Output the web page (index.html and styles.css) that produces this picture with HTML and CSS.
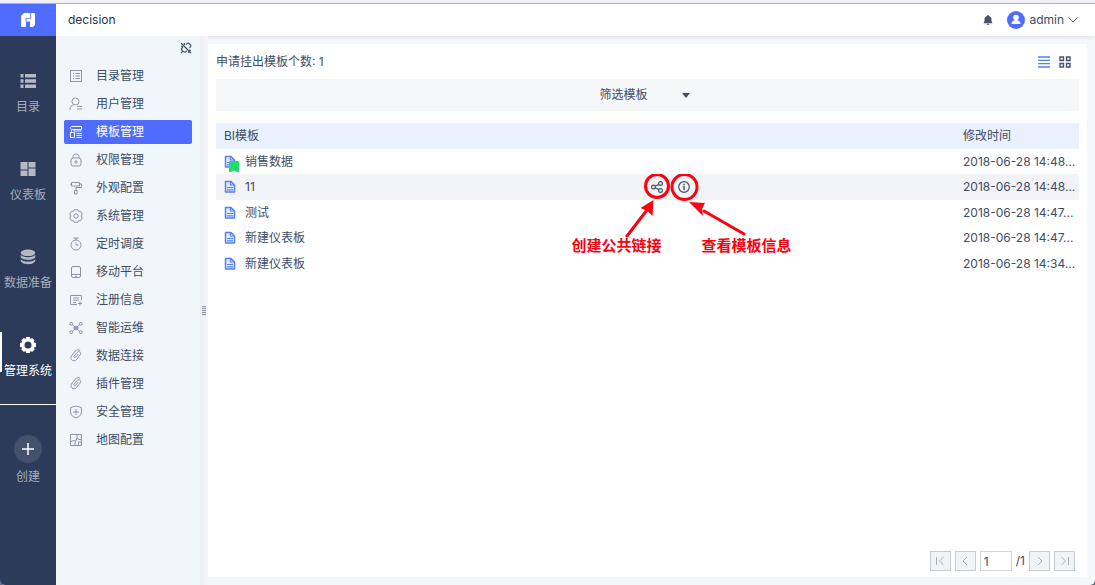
FILE: index.html
```
<!DOCTYPE html>
<html lang="zh-CN">
  <head>
    <meta charset="UTF-8" />
    <meta name="viewport" content="width=device-width, initial-scale=1.0" />
    <title>decision</title>
    <link rel="stylesheet" href="styles.css">
  </head>
  <body>
    <svg class="sprite" aria-hidden="true">
      <symbol id="i-doc" viewBox="0 0 12 14">
        <path d="M1.500 1.500H7L10.500 5v7h-9z" fill="#e3ecff" stroke="#5580f5" stroke-width="1.500" stroke-linejoin="round" />
        <path d="M6.500 1.500V5h4M3 7.500h6M3 9.800h6" fill="none" stroke="#5580f5" stroke-width="1.200" />
      </symbol>
      <symbol id="i-clip" viewBox="0 0 14 14">
        <path d="M9.300 5 6.500 8.300c-.7.900-2.200-.2-1.400-1.200l3-3.600c1.900-2.100 4.700.1 3.100 2.400l-3.900 4.900c-2.400 2.700-6.900-.2-4.900-3.700l3.800-5c1.300-1.500 3.600-1.700 5-.7" />
      </symbol>
    </svg>
    <div class="app">
      <header class="header">
        <a href="#" class="logo" aria-label="decision">
          <svg width="16" height="16" viewBox="0 0 16 16">
            <path d="M4 1h10a1 1 0 0 1 1 1v11l-2 2h-3V9.500H6V14a1 1 0 0 1-1 1H2a1 1 0 0 1-1-1V4z" fill="#fff" />
            <path d="M6 9.500V6.500h4.500V1" fill="none" stroke="#7d92ff" stroke-width="1.200" />
          </svg>
        </a>
        <h1 class="title">decision</h1>
        <button class="bell" aria-label="消息">
          <svg width="10" height="12" viewBox="0 0 10 12">
            <path d="M4.300 1h1.400v1C7.800 2.400 8.500 3.800 8.500 5.500 8.500 7.500 8.800 8.200 9.500 9.200H.5C1.200 8.200 1.500 7.500 1.500 5.500 1.500 3.800 2.200 2.400 4.300 2zM3.800 9.700h2.400v1H3.800z" fill="#47536b" />
          </svg>
        </button>
        <button class="user">
          <svg width="18" height="18" viewBox="0 0 18 18">
            <circle cx="9" cy="9" r="9" fill="#506cff" />
            <circle cx="9" cy="6.500" r="2.800" fill="#fff" />
            <path d="M7.500 8h3v1.500c2 .3 3 1.200 3 3.500h-9c0-2.300 1-3.200 3-3.500z" fill="#fff" />
          </svg>
          <span>admin</span>
          <svg width="10" height="6" viewBox="0 0 10 6"><path d="M.5.5 5 5 9.500.5" fill="none" stroke="#5d6880" /></svg>
        </button>
      </header>

      <div class="main">
        <nav class="rail">
          <a href="#" class="rail-item">
            <svg width="16" height="16" viewBox="0 0 16 16">
              <path d="M.5 1h3v3.500h-3zM5 1h11v3.500H5zM.5 6.300h3v3.500h-3zM5 6.300h11v3.500H5zM.5 11.500h3V15h-3zM5 11.500h11V15H5z" />
            </svg>
            <span>目录</span>
          </a>
          <a href="#" class="rail-item">
            <svg width="16" height="16" viewBox="0 0 16 16">
              <path d="M.5 1h7v7.500h-7zM8.500 1h7v5.500h-7zM.5 9.500h7V15h-7zM8.500 7.500h7V15h-7z" />
            </svg>
            <span>仪表板</span>
          </a>
          <a href="#" class="rail-item">
            <svg width="16" height="16" viewBox="0 0 16 16">
              <ellipse cx="8" cy="3.800" rx="7.300" ry="3.300" />
              <path d="M.7 5.800c2 3.300 12.600 3.300 14.600 0v2C14.500 12 1.500 12 .7 7.800zM.7 10.200c2 3.200 12.600 3.200 14.600 0v1.600c-.8 4.500-13.800 4.500-14.600 0z" />
            </svg>
            <span>数据准备</span>
          </a>
          <a href="#" class="rail-item active">
            <svg width="16" height="16" viewBox="0 0 16 16">
              <path fill-rule="evenodd" d="M6.200 0h3.600l.5 1.900 1.800-1 2.500 2.600-1 1.700L16 6v4l-2.200.6.9 1.900-2.500 2.500-1.800-1-.6 2H6.200l-.6-2-1.800 1-2.500-2.500.9-1.900L0 10V6l2.200-.7-.9-1.800L3.800 1l1.900.9zM8 4.500a3.500 3.500 0 1 0 0 7 3.500 3.500 0 0 0 0-7z" />
            </svg>
            <span>管理系统</span>
          </a>
          <button class="create">
            <span class="create-icon">
              <svg width="12" height="12" viewBox="0 0 12 12"><path d="M6 0v12M0 6h12" stroke="#fff" stroke-width="1.500" /></svg>
            </span>
            <span>创建</span>
          </button>
        </nav>

        <aside class="submenu">
          <button class="pin" aria-label="取消固定">
            <svg width="12" height="12" viewBox="0 0 12 12">
              <path d="M1 1l10 10M6 2.500 7.500 1.200c1-.8 4 2 3.200 3.200L9.500 6M3 5 1.700 6.200c-1 1.200 2.200 4.600 3.600 3.800L7 8.800M1 4l2 .8M4 1l.8 2M2.800 9.200 1 11M8.500 9l.5 2M9 8l2 .5" fill="none" stroke="#46536d" stroke-width="1.200" />
            </svg>
          </button>
          <ul class="menu">
            <li><a href="#"><svg viewBox="0 0 14 14"><path d="M1.500 1.500h11v11h-11zM4 4.500h1M6.500 4.500H11M4 7h1M6.500 7H11M4 9.500h1M6.500 9.500H11" /></svg>目录管理</a></li>
            <li><a href="#"><svg viewBox="0 0 14 14"><circle cx="6.500" cy="4.500" r="3.500" /><path d="M.8 13c.2-3 1.600-4.800 4-5.400M8 9.500h5M8 12h5" /></svg>用户管理</a></li>
            <li><a href="#" class="active"><svg viewBox="0 0 14 14"><path d="M3 1.500h9.500v3H3c-2 0-2-3 0-3zM1.500 7.500h4v5h-4zM2.500 4.500v3M5 4.500v1.500h7.500M7.500 8.500H13M7.500 10.500H13M7.500 12.500H13" /></svg>模板管理</a></li>
            <li><a href="#"><svg viewBox="0 0 14 14"><rect x="2" y="5" width="10" height="8" rx="2" /><path d="M4 5V3.500c0-3.300 6-3.300 6 0V5" /><circle cx="7" cy="9" r="1.200" /></svg>权限管理</a></li>
            <li><a href="#"><svg viewBox="0 0 14 14"><path d="M2.500 1.500h8v3.500h-8zM10.500 3h2v3.500H7V9M5.500 9.500h2.500V13H5.500zM1 3.200h1.500" /></svg>外观配置</a></li>
            <li><a href="#"><svg viewBox="0 0 14 14"><path d="M5.200.8h3.600l.7 1.500 2-.1 1.700 2.800L12.200 7l1 2-1.700 2.800-2-.1-.7 1.500H5.200l-.7-1.500-2 .1L.8 9l1-2-1-2 1.700-2.800 2 .1z" stroke-linejoin="round" /><circle cx="7" cy="7" r="2.200" /></svg>系统管理</a></li>
            <li><a href="#"><svg viewBox="0 0 14 14"><circle cx="7" cy="8" r="5" /><path d="M4.500 1h5M7 1v2M7 5.500V8h2.500" /></svg>定时调度</a></li>
            <li><a href="#"><svg viewBox="0 0 14 14"><rect x="2.500" y="1.500" width="9" height="11" rx="1.500" /><path d="M2.500 9.500h9M6 11.200h2" /></svg>移动平台</a></li>
            <li><a href="#"><svg viewBox="0 0 14 14"><path d="M12.500 7V2.500h-11v9H8M4 5h6M4 7.200h6M4 9.500h3M11 8.500v4M9 10.500h4" /></svg>注册信息</a></li>
            <li><a href="#"><svg viewBox="0 0 14 14"><path d="M3 3.500l8 7M11 3.500l-8 7M4.500 7h5" /><circle cx="7" cy="7" r="2" /><circle cx="2.200" cy="2.800" r="1.400" /><circle cx="11.800" cy="2.800" r="1.400" /><circle cx="2.200" cy="11.200" r="1.400" /><circle cx="11.800" cy="11.200" r="1.400" /></svg>智能运维</a></li>
            <li><a href="#"><svg><use href="#i-clip" /></svg>数据连接</a></li>
            <li><a href="#"><svg><use href="#i-clip" /></svg>插件管理</a></li>
            <li><a href="#"><svg viewBox="0 0 14 14"><path d="M7 1l5.500 1.500V7c0 3-2.500 5-5.500 6-3-1-5.500-3-5.500-6V2.500zM7 4v6M4 7h6" /></svg>安全管理</a></li>
            <li><a href="#"><svg viewBox="0 0 14 14"><path d="M1.500 1.500h11v11h-11zM1.500 8.500 5 7.500l1.500 1L5.500 12.500M8 1.500V5l2 1.500h2.500M8 5 6.500 8.500M9.500 12.500V9h3" /></svg>地图配置</a></li>
          </ul>
        </aside>

        <div class="splitter"><span class="grip"></span></div>

        <main class="panel">
          <div class="toolbar">
            <p>申请挂出模板个数: 1</p>
            <button aria-label="列表视图">
              <svg width="12" height="12" viewBox="0 0 12 12"><path d="M0 1h12M0 4.300h12M0 7.700h12M0 11h12" stroke="#5580f5" stroke-width="1.300" /></svg>
            </button>
            <button aria-label="网格视图">
              <svg width="12" height="12" viewBox="0 0 12 12"><path d="M1 1h3.500v3.500H1zM7.500 1H11v3.500H7.500zM1 7.500h3.500V11H1zM7.500 7.500H11V11H7.500z" fill="none" stroke="#47536b" stroke-width="1.400" /></svg>
            </button>
          </div>

          <div class="filter">
            <div class="select">
              <select aria-label="筛选模板">
                <option>筛选模板</option>
              </select>
            </div>
          </div>

          <table class="templates">
            <colgroup>
              <col class="col-name">
              <col>
              <col class="col-time">
            </colgroup>
            <thead>
              <tr>
                <th colspan="2">BI模板</th>
                <th>修改时间</th>
              </tr>
            </thead>
            <tbody>
              <tr>
                <td>
                  <a href="#" class="name">
                    <span class="doc">
                      <svg width="12" height="14"><use href="#i-doc" /></svg>
                      <svg class="mark" width="10" height="11" viewBox="0 0 10 11"><path d="M0 1a1 1 0 0 1 1-1h8a1 1 0 0 1 1 1v10H8L5 9.500 2 11H0z" fill="#1fdb70" /></svg>
                    </span>
                    销售数据
                  </a>
                </td>
                <td></td>
                <td>2018-06-28 14:48...</td>
              </tr>
              <tr class="hover">
                <td>
                  <a href="#" class="name"><span class="doc"><svg width="12" height="14"><use href="#i-doc" /></svg></span>11</a>
                </td>
                <td class="actions">
                  <div class="action-list">
                    <button aria-label="创建公共链接">
                      <svg width="12" height="12" viewBox="0 0 12 12">
                        <g fill="none" stroke="#47536b" stroke-width="1.200"><circle cx="2.500" cy="6" r="1.900" /><circle cx="9.500" cy="2.500" r="1.900" /><circle cx="9.500" cy="9.500" r="1.900" /><path d="M4.200 5.200 7.800 3.400M4.200 6.800l3.600 1.800" /></g>
                      </svg>
                    </button>
                    <button aria-label="查看模板信息">
                      <svg width="12" height="12" viewBox="0 0 12 12">
                        <circle cx="6" cy="6" r="5.300" fill="none" stroke="#47536b" stroke-width="1.200" />
                        <path d="M5.200 2.800h1.600v1.400H5.200zM4.800 5.200h2v4H5.400v-3h-.6z" fill="#47536b" />
                      </svg>
                    </button>
                  </div>
                  <div class="notes">
                    <svg width="230" height="64" viewBox="0 0 230 64">
                      <g fill="none" stroke="#ff0010" stroke-width="3">
                        <circle cx="89" cy="12" r="11.500" />
                        <circle cx="116.500" cy="13" r="12.500" />
                        <path d="M59 62 79 36M176 60l-40-23" stroke-linecap="round" />
                      </g>
                      <path d="M85.500 26 84.500 42l-5-5-7-3zM121 28l16 1-3 6 1 7z" fill="#ff0010" />
                    </svg>
                    <p class="note-labels"><span>创建公共链接</span><span>查看模板信息</span></p>
                  </div>
                </td>
                <td>2018-06-28 14:48...</td>
              </tr>
              <tr>
                <td><a href="#" class="name"><span class="doc"><svg width="12" height="14"><use href="#i-doc" /></svg></span>测试</a></td>
                <td></td>
                <td>2018-06-28 14:47...</td>
              </tr>
              <tr>
                <td><a href="#" class="name"><span class="doc"><svg width="12" height="14"><use href="#i-doc" /></svg></span>新建仪表板</a></td>
                <td></td>
                <td>2018-06-28 14:47...</td>
              </tr>
              <tr>
                <td><a href="#" class="name"><span class="doc"><svg width="12" height="14"><use href="#i-doc" /></svg></span>新建仪表板</a></td>
                <td></td>
                <td>2018-06-28 14:34...</td>
              </tr>
            </tbody>
          </table>

          <div class="pager">
            <button disabled aria-label="首页"><svg width="10" height="10" viewBox="0 0 10 10"><path d="M1.500 1v8M8.500 1l-4 4 4 4" /></svg></button>
            <button disabled aria-label="上一页"><svg width="10" height="10" viewBox="0 0 10 10"><path d="M7 1 3 5l4 4" /></svg></button>
            <input type="text" value="1" aria-label="页码">
            <span>/1</span>
            <button disabled aria-label="下一页"><svg width="10" height="10" viewBox="0 0 10 10"><path d="M3 1l4 4-4 4" /></svg></button>
            <button disabled aria-label="末页"><svg width="10" height="10" viewBox="0 0 10 10"><path d="M1.500 1l4 4-4 4M8.500 1v8" /></svg></button>
          </div>
        </main>
      </div>
    </div>
  </body>
</html>
```
FILE: styles.css
```
* {
  box-sizing: border-box;
}

body {
  margin: 0;
  background: #656d7c;
  color: #3d4d66;
  font-family: Inter, "Noto Sans CJK SC", sans-serif;
  font-size: 12px;
  line-height: 16px;
}

button,
input,
select {
  font: inherit;
  color: inherit;
}

button {
  display: flex;
  align-items: center;
  justify-content: center;
  padding: 0;
  border: none;
  background: none;
  cursor: pointer;
}

a {
  color: inherit;
  text-decoration: none;
}

p {
  margin: 0;
}

svg {
  display: block;
  flex: none;
}

.sprite {
  position: absolute;
  width: 0;
  height: 0;
}

.app {
  display: flex;
  flex-direction: column;
  min-height: 100vh;
  overflow: hidden;
  border-top: 3px solid #f0f0f6;
  border-radius: 0 0 5px 5px;
  background: #f5f7fa;
}

/* header */
.header {
  display: flex;
  align-items: center;
  height: 33px;
  padding-right: 17px;
  border-top: 1px solid #b0b3bd;
  background: #fff;
  box-shadow: 0 1px 4px rgba(40, 50, 80, 0.12);
}

.logo {
  display: flex;
  align-items: center;
  justify-content: center;
  width: 56px;
  height: 32px;
  background: #506cff;
}

.title {
  flex: 1;
  margin: 0;
  padding-left: 12px;
  font-size: 12px;
  font-weight: 400;
  color: #23304a;
}

.bell {
  margin-right: 14px;
}

.user {
  gap: 4px;
}

/* body */
.main {
  display: flex;
  flex: 1;
}

.rail {
  display: flex;
  flex-direction: column;
  width: 56px;
  padding-top: 16px;
  background: #2c3b5a;
  color: #a6adba;
}

.rail svg {
  fill: #b5b9c2;
}

.rail-item {
  display: flex;
  flex-direction: column;
  align-items: center;
  gap: 10px;
  height: 88px;
  padding-top: 21px;
  white-space: nowrap;
}

.rail-item.active {
  color: #fff;
  background: linear-gradient(#fff, #fff) 0 16px / 2px 40px no-repeat;
}

.rail-item.active svg {
  fill: #fff;
}

.create {
  flex-direction: column;
  gap: 6px;
  padding-top: 30px;
  border-top: 1px solid #fff;
}

.create-icon {
  display: flex;
  align-items: center;
  justify-content: center;
  width: 28px;
  height: 28px;
  border-radius: 50%;
  background: #44516c;
}

.submenu {
  width: 144px;
  padding: 4px 8px;
  background: #f0f6fa;
}

.pin {
  width: 16px;
  height: 16px;
  margin: 0 -2px 8px auto;
}

.menu {
  display: flex;
  flex-direction: column;
  gap: 4px;
  margin: 0;
  padding: 0;
  list-style: none;
}

.menu a {
  display: flex;
  align-items: center;
  gap: 13px;
  height: 24px;
  padding-left: 5px;
  border-radius: 2px;
}

.menu svg {
  width: 14px;
  height: 14px;
  fill: none;
  stroke: #8a94a8;
}

.menu .active {
  background: #506cff;
  color: #fff;
}

.menu .active svg {
  stroke: #fff;
}

.splitter {
  display: flex;
  align-items: center;
  width: 8px;
  padding-left: 2px;
  background: linear-gradient(to right, #eceef2, #f5f6f9);
}

.grip {
  width: 4px;
  height: 10px;
  background: repeating-linear-gradient(#9199a8 0 1px, #e4e6eb 1px 2px);
}

/* content */
.panel {
  display: flex;
  flex: 1;
  flex-direction: column;
  min-width: 0;
  margin: 8px 8px 8px 0;
  padding: 0 8px;
  background: #fff;
}

.toolbar {
  display: flex;
  align-items: center;
  gap: 9px;
  height: 35px;
  padding-right: 8px;
}

.toolbar p {
  flex: 1;
}

.filter {
  display: flex;
  justify-content: center;
  align-items: center;
  height: 32px;
  margin-bottom: 12px;
  background: #f6f7f9;
}

.select {
  display: flex;
  align-items: center;
  width: 96px;
}

.select select {
  width: 82px;
  padding: 0;
  border: none;
  background: none;
  appearance: none;
}

.select::after {
  content: "";
  border: 4px solid transparent;
  border-top: 5px solid #3d4d66;
  border-bottom: none;
}

.templates {
  width: 100%;
  table-layout: fixed;
  border-collapse: collapse;
}

.col-name {
  width: 50%;
}

.col-time {
  width: 124px;
}

.templates th,
.templates td {
  padding: 0 0 0 8px;
  font-weight: 400;
  text-align: left;
  white-space: nowrap;
}

.templates thead tr {
  height: 26px;
  background: #e9f1ff;
}

.templates tbody tr {
  height: 25px;
}

.templates tbody tr:nth-child(even) {
  height: 26px;
}

.templates .hover {
  background: #f1f3f7;
}

.name {
  display: flex;
  align-items: center;
  gap: 9px;
}

.doc {
  position: relative;
}

.mark {
  position: absolute;
  left: 5px;
  top: 6px;
}

.templates .actions {
  position: relative;
  padding-left: 3px;
}

.action-list {
  display: flex;
  gap: 15px;
}

.notes {
  position: absolute;
  left: -80px;
  top: 0;
  color: #ff0010;
  font-size: 15px;
  font-weight: 700;
  pointer-events: none;
}

.note-labels {
  display: flex;
  gap: 40px;
  padding-left: 4px;
}

.pager {
  display: flex;
  align-items: center;
  gap: 4px;
  margin: auto 4px 6px auto;
}

.pager button {
  width: 21px;
  height: 20px;
  border: 1px solid #c5ccd6;
  background: #f1f4f7;
}

.pager svg {
  fill: none;
  stroke: #a3adbb;
}

.pager input {
  width: 32px;
  height: 20px;
  padding: 0 3px;
  border: 1px solid #cfd6e0;
  background: #fff;
}
```
